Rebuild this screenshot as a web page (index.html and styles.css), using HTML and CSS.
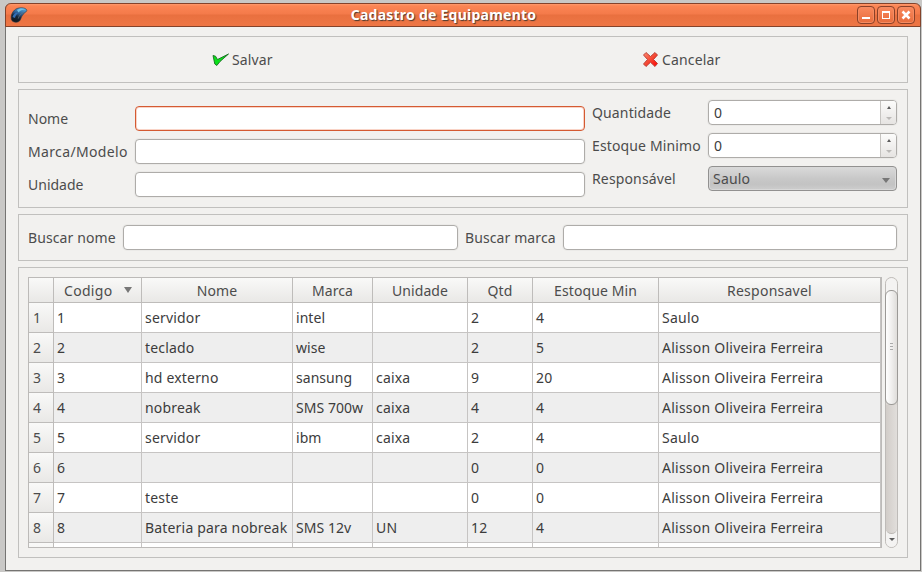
FILE: index.html
```html
<!DOCTYPE html>
<html lang="pt">
<head>
<meta charset="utf-8">
<title>Cadastro de Equipamento</title>
<link rel="stylesheet" href="styles.css">
</head>
<body>
<div class="window">
  <header class="titlebar">
    <svg class="app-icon" width="18" height="18" viewBox="0 0 18 18">
      <defs>
        <linearGradient id="body" x1="0.7" y1="0" x2="0.3" y2="1"><stop offset="0" stop-color="#58a8da"/><stop offset=".45" stop-color="#28588e"/><stop offset=".65" stop-color="#152535"/><stop offset="1" stop-color="#14181d"/></linearGradient>
      </defs>
      <path d="M1.2 12C1 8 3.5 4 7 2.500C10 1.300 14 1.500 16 3C17.700 4.500 16.500 5.500 14.500 7C12 9 11.500 11 10.500 13.500C9.500 16 7 16.600 4.500 16C2 15.500 1.200 14 1.200 12Z" fill="url(#body)" stroke="#263544" stroke-width=".6"/>
      <path d="M7 4C9 2 13 2 15.500 3.300C12 3.500 10 5 8.500 6.500Z" fill="#71c0e7"/>
      <path d="M2.500 11C3.500 8 6 6 8 7C6.500 8 5.500 10 5 12Z" fill="#326eb5"/>
      <path d="M13.500 6.500C10.500 7.500 9 10 8.300 12.500" fill="none" stroke="#647079" stroke-width=".8"/>
    </svg>
    <h1 class="title">Cadastro de Equipamento</h1>
    <div class="controls">
      <span class="control"><svg width="16" height="16" viewBox="0 0 16 16"><path d="M4 10h8v2H4z" fill="#fff"/></svg></span>
      <span class="control"><svg width="16" height="16" viewBox="0 0 16 16"><path d="M4 4h8v8H4zM5 6v5h6V6z" fill="#fff" fill-rule="evenodd"/></svg></span>
      <span class="control"><svg width="16" height="16" viewBox="0 0 16 16"><path d="M4.500 4.500l7 7M11.500 4.500l-7 7" stroke="#fff" stroke-width="2.500"/></svg></span>
    </div>
  </header>
  <main class="content">
    <section class="panel actions">
      <div class="action save">
        <svg width="18" height="14" viewBox="0 0 18 14"><path d="M1 2.500L3.500 3.200L5.500 6.500L16.500 1L8 8.500L4.800 12.500L2.800 11Z" fill="#0be01a" stroke="#176d20" stroke-width=".9" stroke-linejoin="round"/></svg>
        <span>Salvar</span>
      </div>
      <div class="action cancel">
        <svg width="17" height="17" viewBox="0 0 17 17">
          <defs><linearGradient id="red" x1="0" y1="0" x2="1" y2="1"><stop offset="0" stop-color="#ff8a72"/><stop offset=".45" stop-color="#f5503a"/><stop offset="1" stop-color="#f00"/></linearGradient></defs>
          <path d="M4 1.500L8.500 5.500L13 1.500L15.500 4L11.500 8.500L15.500 12.500L13 15.500L8.500 11.300L4 15.500L1.500 13L5.500 8.500L1.500 4Z" fill="url(#red)" stroke="#b63a30" stroke-width=".9" stroke-linejoin="round"/>
        </svg>
        <span>Cancelar</span>
      </div>
    </section>

    <section class="panel form">
      <div class="fields left">
        <label>Nome</label><div class="input focus"></div>
        <label>Marca/Modelo</label><div class="input"></div>
        <label>Unidade</label><div class="input"></div>
      </div>
      <div class="fields right">
        <label>Quantidade</label>
        <div class="input spin"><span class="value">0</span><span class="steps"><i class="up"></i><i class="down off"></i></span></div>
        <label>Estoque Minimo</label>
        <div class="input spin"><span class="value">0</span><span class="steps"><i class="up"></i><i class="down off"></i></span></div>
        <label>Responsável</label>
        <div class="select"><span>Saulo</span><i class="tri"></i></div>
      </div>
    </section>

    <section class="panel search">
      <label>Buscar nome</label><div class="input"></div>
      <label>Buscar marca</label><div class="input"></div>
    </section>

    <section class="panel list">
      <div class="table-view">
        <table>
          <colgroup><col class="c0"><col class="c1"><col class="c2"><col class="c3"><col class="c4"><col class="c5"><col class="c6"><col class="c7"></colgroup>
          <thead><tr><th></th><th class="sorted"><div>Codigo<i class="tri"></i></div></th><th>Nome</th><th>Marca</th><th>Unidade</th><th>Qtd</th><th>Estoque Min</th><th>Responsavel</th></tr></thead>
          <tbody>
            <tr><th>1</th><td>1</td><td>servidor</td><td>intel</td><td></td><td>2</td><td>4</td><td>Saulo</td></tr>
            <tr><th>2</th><td>2</td><td>teclado</td><td>wise</td><td></td><td>2</td><td>5</td><td>Alisson Oliveira Ferreira</td></tr>
            <tr><th>3</th><td>3</td><td>hd externo</td><td>sansung</td><td>caixa</td><td>9</td><td>20</td><td>Alisson Oliveira Ferreira</td></tr>
            <tr><th>4</th><td>4</td><td>nobreak</td><td>SMS 700w</td><td>caixa</td><td>4</td><td>4</td><td>Alisson Oliveira Ferreira</td></tr>
            <tr><th>5</th><td>5</td><td>servidor</td><td>ibm</td><td>caixa</td><td>2</td><td>4</td><td>Saulo</td></tr>
            <tr><th>6</th><td>6</td><td></td><td></td><td></td><td>0</td><td>0</td><td>Alisson Oliveira Ferreira</td></tr>
            <tr><th>7</th><td>7</td><td>teste</td><td></td><td></td><td>0</td><td>0</td><td>Alisson Oliveira Ferreira</td></tr>
            <tr><th>8</th><td>8</td><td>Bateria para nobreak</td><td>SMS 12v</td><td>UN</td><td>12</td><td>4</td><td>Alisson Oliveira Ferreira</td></tr>
            <tr><th></th><td></td><td></td><td></td><td></td><td></td><td></td><td></td></tr>
          </tbody>
        </table>
      </div>
      <div class="scrollbar">
        <span class="arrow"><i class="up off"></i></span>
        <span class="thumb"><i></i><i></i><i></i></span>
        <span class="track"></span>
        <span class="arrow end"><i class="down"></i></span>
      </div>
    </section>
  </main>
</div>
</body>
</html>
```

FILE: styles.css
```css
* { box-sizing: border-box; }
body {
  margin: 0;
  padding: 3px 1px 1px 5px;
  height: 572px;
  overflow: hidden;
  background: #c9c8c6;
  font-family: "Noto Sans", sans-serif;
  font-size: 14px;
  line-height: 20px;
  color: #4c4c4c;
}
i { display: block; }
svg { display: block; flex: none; }

.window {
  height: 568px;
  background: #f2f1ef;
  border: 1px solid #757472;
  border-top: 0;
  border-radius: 6px 6px 0 0;
}
.titlebar {
  display: flex;
  align-items: center;
  height: 24px;
  margin: 0 -1px;
  padding: 0 5px 0 4px;
  border: 1px solid #84432b;
  border-radius: 6px 6px 0 0;
  background: linear-gradient(#ff9a6c 0, #fb8554 2px, #f47a4a 10px, #e9703f 11px, #ee7645 100%);
}
.title {
  flex: 1;
  margin: 0 0 0 2px;
  text-align: center;
  font-size: 14px;
  line-height: 20px;
  font-weight: 700;
  letter-spacing: .24px;
  color: #fff;
  text-shadow: 1px 1px 1px #4a3a30;
}
.controls { display: flex; gap: 2px; }
.control {
  width: 18px;
  height: 18px;
  border: 1px solid #8b4128;
  border-radius: 4px;
  background: linear-gradient(#f98a5e, #e86c3c);
  box-shadow: inset 0 0 0 1px #f58b62;
}

.content {
  display: flex;
  flex-direction: column;
  gap: 6px;
  padding: 9px 12px 12px;
}
.panel { border: 1px solid #c1c0be; }

.actions { display: flex; height: 47px; align-items: center; letter-spacing: .15px; }
.action { display: flex; align-items: center; }
.save { width: 430px; padding-left: 193px; gap: 2px; }
.cancel { padding-left: 193px; gap: 3px; }

.form { display: flex; gap: 7px; height: 119px; padding: 10px 10px 0 9px; }
.fields { display: grid; grid-auto-rows: 25px; row-gap: 8px; align-items: center; align-content: start; }
.left { grid-template-columns: 107px 450px; padding-top: 6px; }
.left label:nth-of-type(2) { letter-spacing: .35px; }
.right { grid-template-columns: 116px 189px; }
.right label { white-space: nowrap; letter-spacing: .14px; }

.input {
  height: 25px;
  background: #fff;
  border: 1px solid #aeaca9;
  border-radius: 4px;
  box-shadow: 0 0 0 1px #ebeae8;
}
.focus { border-color: #d45a32; box-shadow: inset 0 0 0 1px #f9d3c6; }
.spin { display: flex; color: #3c3c3c; }
.value { flex: 1; padding: 2px 0 0 5px; }
.steps {
  display: flex;
  flex-direction: column;
  justify-content: space-between;
  align-items: center;
  width: 16px;
  padding: 5px 0 4px;
  border-left: 1px solid #c6c4c1;
  border-radius: 0 3px 3px 0;
  background: linear-gradient(#fcfcfb, #e6e4e2);
}
.up { border: 2px solid transparent; border-top: 0; border-bottom: 3px solid #5c5c5c; }
.down { border: 3px solid transparent; border-bottom: 0; border-top: 3px solid #5c5c5c; }
.up.off { border-bottom-color: #aaa; }
.down.off { border-top-color: #bbb9b7; }
.select {
  display: flex;
  align-items: center;
  justify-content: space-between;
  height: 25px;
  padding: 0 6px 0 4px;
  border: 1px solid #929190;
  border-radius: 4px;
  background: linear-gradient(#dadada, #c8c8c8 50%, #c3c3c3 75%, #cdcdcd);
  box-shadow: inset 0 0 0 1px #d8d8d8;
}
.select span { letter-spacing: .2px; }
.tri {
  width: 8px;
  height: 6px;
  border: 4px solid transparent;
  border-bottom: 0;
  border-top: 6px solid #777;
}
.select .tri { margin-top: 3px; border-top-width: 5px; height: 5px; }

.search { display: grid; grid-template-columns: 95px 335px 105px 334px; height: 47px; padding: 10px 0 0 9px; }
.search label { line-height: 25px; white-space: nowrap; letter-spacing: .1px; }
.search label:nth-of-type(2) { padding-left: 7px; }

.list { display: flex; gap: 3px; height: 291px; padding: 9px; }
.table-view {
  width: 854px;
  height: 271px;
  overflow: hidden;
  border: 1px solid #bcbab8;
  background: #fff;
}
table { width: 852px; table-layout: fixed; border-collapse: separate; border-spacing: 0; }
.c0 { width: 25px; } .c1 { width: 88px; } .c2 { width: 151px; } .c3 { width: 80px; }
.c4 { width: 95px; } .c5 { width: 65px; } .c6 { width: 126px; } .c7 { width: 222px; }
th, td {
  height: 30px;
  padding: 0 0 0 3px;
  border-right: 1px solid #c6c4c3;
  border-bottom: 1px solid #c6c4c3;
  text-align: left;
  font-weight: 400;
  white-space: nowrap;
}
td { color: #3c3c3c; letter-spacing: .18px; }
td:nth-child(4) { letter-spacing: .05px; }
td:nth-child(8) { letter-spacing: .24px; }
th { background: linear-gradient(#f9f9f8, #e9e8e6); border-color: #bebcba; }
tbody th { padding-left: 4px; }
thead th { height: 25px; padding: 1px 0 0; text-align: center; line-height: 22px; letter-spacing: .1px; }
thead th:nth-child(8) { letter-spacing: .25px; }
.sorted div { display: flex; align-items: center; justify-content: space-between; padding: 0 9px 0 10px; letter-spacing: .3px; }
.sorted .tri { margin-bottom: 2px; }
tbody tr:nth-child(even) td { background: #eee; }

.scrollbar {
  display: flex;
  flex-direction: column;
  width: 13px;
  height: 271px;
  border: 1px solid #bebbb8;
  border-radius: 7px;
  background: #dad6d2;
}
.arrow { display: flex; justify-content: center; height: 17px; margin-bottom: -5px; padding-top: 6px; border-radius: 6px 6px 0 0; background: #f4f3f2; }
.thumb {
  display: flex;
  flex-direction: column;
  gap: 2px;
  align-items: center;
  justify-content: center;
  height: 115px;
  margin: 0 -1px;
  padding-bottom: 2px;
  border: 1px solid #9b9996;
  border-radius: 6px;
  background: linear-gradient(90deg, #fff, #f2f1f0 45%, #dfddda);
}
.thumb i { width: 3px; height: 1px; background: #aaa; }
.track { flex: 1; border-radius: 0 0 6px 6px; border-bottom: 1px solid #bbb7b3; background: linear-gradient(90deg, #d2cdc9, #e1dedb); }
.arrow.end { height: 18px; margin: -5px 0 0; padding-top: 9px; border-radius: 0 0 6px 6px; }
.track { position: relative; }
```
